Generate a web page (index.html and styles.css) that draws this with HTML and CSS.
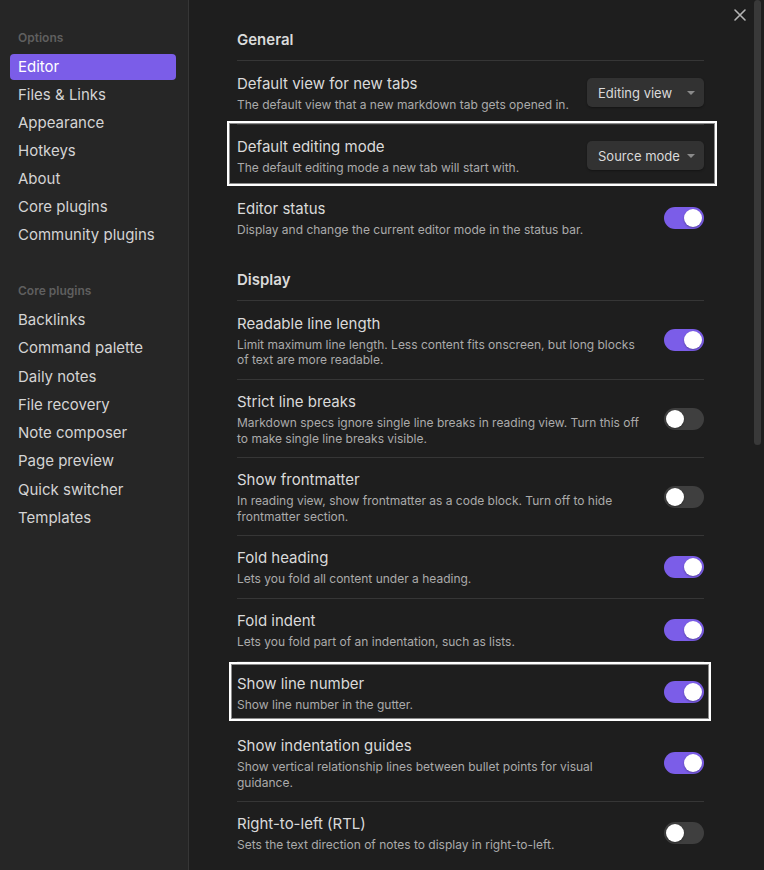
FILE: index.html
```html
<!DOCTYPE html>
<html>
<head>
<meta charset="utf-8">
<link rel="stylesheet" href="styles.css">
</head>
<body>
<div class="modal">
  <nav class="sidebar">
    <div class="group">
      <div class="group-title">Options</div>
      <div class="nav-item active">Editor</div>
      <div class="nav-item">Files &amp; Links</div>
      <div class="nav-item">Appearance</div>
      <div class="nav-item">Hotkeys</div>
      <div class="nav-item">About</div>
      <div class="nav-item">Core plugins</div>
      <div class="nav-item">Community plugins</div>
    </div>
    <div class="group group-2">
      <div class="group-title">Core plugins</div>
      <div class="nav-item">Backlinks</div>
      <div class="nav-item">Command palette</div>
      <div class="nav-item">Daily notes</div>
      <div class="nav-item">File recovery</div>
      <div class="nav-item">Note composer</div>
      <div class="nav-item">Page preview</div>
      <div class="nav-item">Quick switcher</div>
      <div class="nav-item">Templates</div>
    </div>
  </nav>
  <main class="content">
    <div class="close" aria-label="Close">
      <svg width="14" height="14" viewBox="0 0 14 14"><path d="M2 2 L12 12 M12 2 L2 12" stroke="#b5b5b5" stroke-width="1.6" stroke-linecap="round"/></svg>
    </div>
    <div class="scroll-thumb"></div>

    <div class="heading first">General</div>
    <div class="item no-border">
      <div class="info">
        <div class="name">Default view for new tabs</div>
        <div class="desc">The default view that a new markdown tab gets opened in.</div>
      </div>
      <div class="dropdown">Editing view<span class="caret"></span></div>
    </div>
    <div class="item hl-a">
      <div class="info">
        <div class="name">Default editing mode</div>
        <div class="desc">The default editing mode a new tab will start with.</div>
      </div>
      <div class="dropdown">Source mode<span class="caret"></span></div>
    </div>
    <div class="item no-border">
      <div class="info">
        <div class="name">Editor status</div>
        <div class="desc">Display and change the current editor mode in the status bar.</div>
      </div>
      <div class="toggle on"></div>
    </div>

    <div class="heading">Display</div>
    <div class="item no-border">
      <div class="info">
        <div class="name">Readable line length</div>
        <div class="desc">Limit maximum line length. Less content fits onscreen, but long blocks of text are more readable.</div>
      </div>
      <div class="toggle on"></div>
    </div>
    <div class="item">
      <div class="info">
        <div class="name">Strict line breaks</div>
        <div class="desc">Markdown specs ignore single line breaks in reading view. Turn this off to make single line breaks visible.</div>
      </div>
      <div class="toggle"></div>
    </div>
    <div class="item">
      <div class="info">
        <div class="name">Show frontmatter</div>
        <div class="desc">In reading view, show frontmatter as a code block. Turn off to hide frontmatter section.</div>
      </div>
      <div class="toggle"></div>
    </div>
    <div class="item">
      <div class="info">
        <div class="name">Fold heading</div>
        <div class="desc">Lets you fold all content under a heading.</div>
      </div>
      <div class="toggle on"></div>
    </div>
    <div class="item">
      <div class="info">
        <div class="name">Fold indent</div>
        <div class="desc">Lets you fold part of an indentation, such as lists.</div>
      </div>
      <div class="toggle on"></div>
    </div>
    <div class="item hl-b">
      <div class="info">
        <div class="name">Show line number</div>
        <div class="desc">Show line number in the gutter.</div>
      </div>
      <div class="toggle on"></div>
    </div>
    <div class="item no-border">
      <div class="info">
        <div class="name">Show indentation guides</div>
        <div class="desc">Show vertical relationship lines between bullet points for visual guidance.</div>
      </div>
      <div class="toggle on"></div>
    </div>
    <div class="item">
      <div class="info">
        <div class="name">Right-to-left (RTL)</div>
        <div class="desc">Sets the text direction of notes to display in right-to-left.</div>
      </div>
      <div class="toggle"></div>
    </div>
  </main>
</div>
</body>
</html>
```
FILE: styles.css
```css
* { box-sizing: border-box; }
html, body {
  margin: 0;
  padding: 0;
  width: 764px;
  height: 870px;
  overflow: hidden;
  background: #1e1e1e;
  font-family: Inter, "Noto Sans", sans-serif;
  color: #dadada;
}
.modal {
  display: flex;
  width: 764px;
  height: 870px;
}
.sidebar {
  width: 189px;
  flex: none;
  background: #262626;
  border-right: 1px solid #363636;
  padding: 22px 12px 0 10px;
}
.group-title {
  font-size: 12px;
  line-height: 16px;
  font-weight: 600;
  color: #5f5f5f;
  padding: 8px 8px 8px;
}
.group-2 { margin-top: 27px; }
.nav-item {
  font-size: 15px;
  line-height: 20px;
  padding: 3px 8px;
  margin-bottom: 2px;
  border-radius: 4px;
  color: #d4d4d4;
}
.group-2 .nav-item { margin-bottom: 2.3px; }
.nav-item.active {
  background: #7b5de8;
  color: #ffffff;
}
.content {
  position: relative;
  flex: 1;
  padding: 30px 60px 0 48px;
}
.close {
  position: absolute;
  top: 8px;
  right: 17px;
  width: 14px;
  height: 14px;
  display: flex;
}
.scroll-thumb {
  position: absolute;
  top: 0;
  right: 3px;
  width: 7px;
  height: 445px;
  background: #393939;
  border-radius: 4px;
}
.heading {
  font-size: 15px;
  line-height: 20px;
  font-weight: 600;
  color: #dadada;
  padding-bottom: 10px;
  border-bottom: 1px solid #363636;
  margin-top: 21px;
}
.heading.first { margin-top: 0; }
.item {
  position: relative;
  display: flex;
  align-items: center;
  gap: 16px;
  padding: 12px 0;
  border-top: 1px solid #363636;
}
.item.no-border { border-top-color: transparent; }
.info { flex: 1; min-width: 0; }
.name {
  font-size: 15px;
  line-height: 20px;
  color: #dadada;
}
.desc {
  font-size: 12px;
  line-height: 15.6px;
  padding-top: 3px;
  margin-bottom: -1px;
  color: #ababab;
}
.dropdown {
  flex: none;
  width: 117px;
  height: 29px;
  background: #323232;
  border-radius: 5px;
  box-shadow: 0 1px 2px rgba(0,0,0,0.35);
  font-size: 13px;
  line-height: 30px;
  color: #dadada;
  padding-left: 11px;
  position: relative;
}
.caret {
  position: absolute;
  right: 9px;
  top: 13px;
  width: 0;
  height: 0;
  border-left: 4px solid transparent;
  border-right: 4px solid transparent;
  border-top: 4px solid #8a8a8a;
}
.toggle {
  flex: none;
  position: relative;
  width: 40px;
  height: 22px;
  border-radius: 11px;
  background: #3f3f3f;
}
.toggle::after {
  content: "";
  position: absolute;
  top: 2px;
  left: 2px;
  width: 18px;
  height: 18px;
  border-radius: 50%;
  background: #ffffff;
  box-shadow: 0 1px 2px rgba(0,0,0,0.3);
}
.toggle.on { background: #7b5de8; }
.toggle.on::after { left: 20px; }
.hl-a::after, .hl-b::after {
  content: "";
  position: absolute;
  border: 2px solid #ffffff;
  box-shadow: inset 0 0 0 1px #8a8a8a;
  pointer-events: none;
}
.hl-a::after { top: -4px; bottom: 0; left: -10px; right: -13px; }
.hl-b::after { top: 0; bottom: 2px; left: -8px; right: -7px; }
```
